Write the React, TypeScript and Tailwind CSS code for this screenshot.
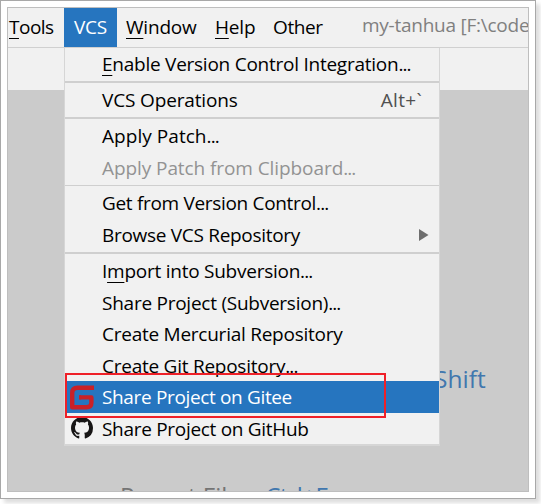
import type { ReactNode } from "react";

function Item({
  children,
  size = "h-[31.5px]",
  tone = "text-black",
  tracking = "tracking-[-0.25px]",
  icon,
  end,
}: {
  children: ReactNode;
  size?: string;
  tone?: string;
  tracking?: string;
  icon?: ReactNode;
  end?: ReactNode;
}) {
  return (
    <div className={`flex shrink-0 items-center ${size} ${tone}`}>
      <div className="flex w-[37px] shrink-0 items-center pl-[4px]">{icon}</div>
      <div className={`flex-1 whitespace-nowrap ${tracking}`}>{children}</div>
      {end}
    </div>
  );
}

function Dots() {
  return <span className="tracking-[-0.9px]">...</span>;
}

function GiteeIcon() {
  return (
    <svg width="25" height="25" viewBox="0 0 25 25" fill="none" stroke="#c92128" strokeWidth="4.4" strokeLinejoin="round">
      <path d="M25 2.8H8.6Q3.2 2.8 3.2 8.2V22.2H17.5Q22.4 22.2 22.4 17.5V12.4H10.5" />
      <path d="M11 10.2V14.6" strokeWidth="2" />
    </svg>
  );
}

function GithubIcon() {
  return (
    <svg className="-mt-[3px] ml-[2px]" width="22" height="22" viewBox="0 0 16 16" fill="#171515">
      <path d="M8 0C3.58 0 0 3.58 0 8c0 3.54 2.29 6.53 5.47 7.59.4.07.55-.17.55-.38 0-.19-.01-.82-.01-1.49-2.01.37-2.53-.49-2.69-.94-.09-.23-.48-.94-.82-1.13-.28-.15-.68-.52-.01-.53.63-.01 1.08.58 1.23.82.72 1.21 1.87.87 2.33.66.07-.52.28-.87.51-1.07-1.78-.2-3.64-.89-3.64-3.95 0-.87.31-1.59.82-2.15-.08-.2-.36-1.02.08-2.12 0 0 .67-.21 2.2.82.64-.18 1.32-.27 2-.27s1.36.09 2 .27c1.53-1.04 2.2-.82 2.2-.82.44 1.1.16 1.92.08 2.12.51.56.82 1.27.82 2.15 0 3.07-1.87 3.75-3.65 3.95.29.25.54.73.54 1.48 0 1.07-.01 1.93-.01 2.2 0 .21.15.46.55.38A8.01 8.01 0 0 0 16 8c0-4.42-3.58-8-8-8z" />
    </svg>
  );
}

const mnemonic = "underline decoration-1 underline-offset-[4px]";

export default function App() {
  return (
    <div className="h-[504px] w-[541px] overflow-hidden bg-white font-['Open_Sans','Noto_Sans',sans-serif] text-[19px] leading-none">
      <div className="h-[499px] w-[536px] border border-[#a8a8a8] bg-white p-[6px] shadow-[4px_4px_4px_#dedede]">
        <div className="relative flex h-[485px] w-[522px] flex-col overflow-hidden border border-[#bebebe] bg-[#cbcbcb]">
          <div className="flex h-10 shrink-0 items-center border-b border-[#d0d0d0] bg-[#f1f1f1] pb-px whitespace-nowrap text-black">
            <div className="w-14 shrink-0 pl-px tracking-[-0.5px]"><span className={mnemonic}>T</span>ools</div>
            <div className="flex h-[39px] w-[53px] shrink-0 items-center justify-center bg-[#2675bf] text-white tracking-[-0.2px]">VCS</div>
            <div className="w-[89px] shrink-0 pl-[9px] tracking-[-0.2px]"><span className={mnemonic}>W</span>indow</div>
            <div className="w-[59px] shrink-0 pl-[9px] tracking-[-0.2px]"><span className={mnemonic}>H</span>elp</div>
            <div className="w-[97px] shrink-0 pl-[8px] tracking-[-0.4px]">Other</div>
            <div className="pb-[3px] text-[#808080] tracking-[-0.25px]">my-tanhua [F:\code</div>
          </div>
          <div className="h-[42px] shrink-0 bg-[#f1f1f1]" />
          <div className="relative flex-1">
            <div className="absolute top-[277px] left-[426px] text-[24.5px] text-[#4177ae]">Shift</div>
            <div className="absolute top-[390px] left-[112px] flex gap-[13px] text-2xl whitespace-nowrap">
              <span className="text-[#747474]">Recent Files</span>
              <span className="text-[#4177ae] tracking-[-0.6px]">Ctrl+E</span>
            </div>
          </div>

          <div className="absolute top-10 left-14 flex h-[398px] w-[376px] flex-col border-x border-b-2 border-[#d6d6d6] bg-[#f1f1f1]">
            <Item size="h-[33px]"><span className={mnemonic}>E</span>nable Version Control Integration<Dots /></Item>
            <div className="h-[2px] shrink-0 bg-[#cfcfcf]" />
            <Item size="h-[34px]" tracking="tracking-[-0.15px]" end={<span className="pr-[17px] text-[#505050] tracking-[0.3px]">Alt+`</span>}>VCS Operations</Item>
            <div className="h-[2px] shrink-0 bg-[#cfcfcf]" />
            <div className="h-[66px] shrink-0 pt-[2px]">
              <Item tracking="tracking-[0.05px]">Apply Patch<Dots /></Item>
              <Item tone="text-[#939393]" tracking="tracking-[-0.08px]">Apply Patch from Clipboard<Dots /></Item>
            </div>
            <div className="h-px shrink-0 bg-[#cfcfcf]" />
            <div className="h-[66px] shrink-0 pt-[2px]">
              <Item tracking="tracking-[-0.32px]">Get from Version Control<Dots /></Item>
              <Item
                tracking="tracking-[-0.3px]"
                end={
                  <svg className="mr-[10px]" width="10" height="12" viewBox="0 0 10 12">
                    <path d="M0 0L9.5 6L0 12Z" fill="#6e6e6e" />
                  </svg>
                }
              >
                Browse VCS Repository
              </Item>
            </div>
            <div className="h-[2px] shrink-0 bg-[#cfcfcf]" />
            <div className="shrink-0 pt-px">
              <div className="relative top-px">
                <Item>I<span className={mnemonic}>m</span>port into Subversion<Dots /></Item>
                <Item>Share Project (Subversion)<Dots /></Item>
                <Item>Create Mercurial Repository</Item>
                <Item>Create Git Repository<Dots /></Item>
              </div>
              <Item size="h-8" tone="relative bg-[#2675bf] text-white" tracking="tracking-[-0.35px]" icon={<GiteeIcon />}>Share Project on Gitee</Item>
              <Item size="h-[31px] pt-px" tracking="tracking-[-0.3px]" icon={<GithubIcon />}>Share Project on GitHub</Item>
            </div>
          </div>
          <div className="absolute top-[365px] left-[57px] h-[45px] w-[321px] border-2 border-[#ef2028]" />
        </div>
      </div>
    </div>
  );
}
